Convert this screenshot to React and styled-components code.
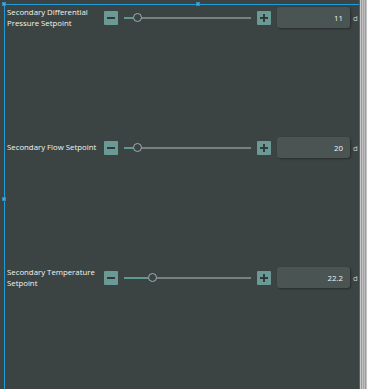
import React from 'react'
import styled, { createGlobalStyle } from 'styled-components'

const GlobalStyle = createGlobalStyle`
  html, body {
    margin: 0;
    padding: 0;
    background: #3b4443;
  }
  body {
    font-family: "Open Sans", "Noto Sans", sans-serif;
  }
`

const Page = styled.div`
  display: flex;
  width: 367px;
  height: 389px;
  overflow: hidden;
  background: #3b4443;
`

const Canvas = styled.div`
  position: relative;
  width: 359px;
  height: 389px;
  overflow: hidden;
`

const Strip = styled.div`
  width: 8px;
  height: 389px;
  background: linear-gradient(to right,
    #59605f 0 1px, #c9c9c9 1px 2px, #979797 2px 3px, #c4c4c4 3px 4px,
    #a3a3a3 4px 5px, #bdbdbd 5px 6px, #9c9c9c 6px 7px, #c2c2c2 7px 8px);
`

const Frame = styled.div`
  margin: 4px 0 0 4px;
  width: 388px;
  height: 400px;
  border-top: 1px solid #1f9bd7;
  border-left: 1px solid #1f9bd7;
`

const Handle = styled.div`
  position: absolute;
  width: 4px;
  height: 4px;
  background: #5aa3c8;
  border: 1px solid #2a8fc4;
  box-sizing: border-box;
  left: ${p => p.$x}px;
  top: ${p => p.$y}px;
`

const Rows = styled.div`
  display: flex;
  flex-direction: column;
  gap: 109px;
  padding: 2px 0 0 2px;
`

const Row = styled.div`
  display: grid;
  grid-template-columns: 91px 14px 127px 14px 73px auto;
  column-gap: 6px;
  align-items: center;
  height: 21px;
`

const Label = styled.div`
  font-size: 7.8px;
  line-height: 10.8px;
  color: #f2f4f3;
`

const StepButton = styled.div`
  position: relative;
  width: 14px;
  height: 14px;
  border-radius: 1px;
  background: #6b9a96;
  &::before {
    content: '';
    position: absolute;
    left: 3px;
    top: 6px;
    width: 8px;
    height: 2px;
    background: #2f3a39;
  }
  &::after {
    content: '';
    display: ${p => (p.$plus ? 'block' : 'none')};
    position: absolute;
    left: 6px;
    top: 3px;
    width: 2px;
    height: 8px;
    background: #2f3a39;
  }
`

const Track = styled.div`
  position: relative;
  height: 2px;
  background: #77827f;
`

const Fill = styled.div`
  height: 2px;
  background: #5e9892;
`

const Thumb = styled.div`
  position: absolute;
  top: -4px;
  width: 9px;
  height: 9px;
  margin-left: -4.5px;
  box-sizing: border-box;
  border-radius: 50%;
  border: 1px solid #9fb0ad;
  background: #3b4443;
`

const ValueBox = styled.div`
  height: 21px;
  box-sizing: border-box;
  padding-right: 7px;
  border-radius: 3px;
  background: #4a5553;
  box-shadow: 1px 1px 2px rgba(0, 0, 0, 0.35);
  display: flex;
  align-items: center;
  justify-content: flex-end;
  font-size: 7.8px;
  color: #f2f4f3;
`

const Unit = styled.div`
  margin-left: -3px;
  font-size: 7.8px;
  color: #c9cfcd;
  white-space: nowrap;
`

const setpoints = [
  { label: 'Secondary Differential Pressure Setpoint', value: '11', pos: 0.11 },
  { label: 'Secondary Flow Setpoint', value: '20', pos: 0.11 },
  { label: 'Secondary Temperature Setpoint', value: '22.2', pos: 0.222 },
]

const App = () => {
  return (
    <Page>
      <GlobalStyle />
      <Canvas>
        <Frame>
          <Rows>
            {setpoints.map(s => (
              <Row key={s.label}>
                <Label>{s.label}</Label>
                <StepButton />
                <Track>
                  <Fill style={{ width: `${s.pos * 100}%` }} />
                  <Thumb style={{ left: `${s.pos * 100}%` }} />
                </Track>
                <StepButton $plus />
                <ValueBox>{s.value}</ValueBox>
                <Unit>d</Unit>
              </Row>
            ))}
          </Rows>
        </Frame>
        <Handle $x={2} $y={2} />
        <Handle $x={196} $y={2} />
        <Handle $x={2} $y={197} />
      </Canvas>
      <Strip />
    </Page>
  )
}

export default App
